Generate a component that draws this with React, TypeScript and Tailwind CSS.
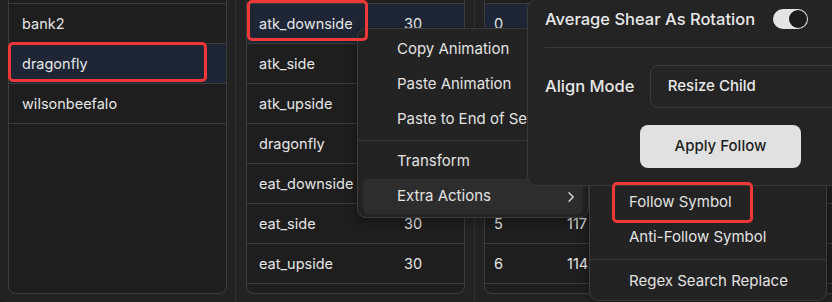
import React from "react";

const rowBorder = "border-b border-[#3b3b3b]";

function Table1() {
  const rows = ["bank2", "dragonfly", "wilsonbeefalo"];
  return (
    <div className="w-[219px] h-[294px] flex flex-col border-x border-b border-[#3d3d3d] rounded-b-[8px] bg-[#1e1e1e] overflow-hidden">
      <div className={`h-[4px] shrink-0 ${rowBorder}`} />
      {rows.map((r, i) => (
        <div
          key={r}
          className={`h-[40px] shrink-0 flex items-center pl-[13px] ${rowBorder} ${i === 1 ? "bg-[#1e2636]" : ""}`}
        >
          {r}
        </div>
      ))}
    </div>
  );
}

function Table2() {
  const rows = ["atk_downside", "atk_side", "atk_upside", "dragonfly", "eat_downside", "eat_side", "eat_upside"];
  return (
    <div className="w-[219px] h-[294px] flex flex-col border-x border-b border-[#3d3d3d] rounded-b-[8px] bg-[#1e1e1e] overflow-hidden">
      <div className={`h-[4px] shrink-0 ${rowBorder}`} />
      {rows.map((r, i) => (
        <div key={r} className={`h-[40px] shrink-0 flex items-center ${rowBorder} ${i === 0 ? "bg-[#1e2636]" : ""}`}>
          <div className="w-[157px] pl-[12px]">{r}</div>
          <div>30</div>
        </div>
      ))}
    </div>
  );
}

function Table3() {
  const rows = [
    ["0", "120"],
    ["1", "118"],
    ["2", "119"],
    ["3", "116"],
    ["4", "115"],
    ["5", "117"],
    ["6", "114"],
  ];
  return (
    <div className="w-[400px] h-[294px] flex flex-col border-x border-b border-[#3d3d3d] rounded-b-[8px] bg-[#1e1e1e] overflow-hidden">
      <div className={`h-[4px] shrink-0 ${rowBorder}`} />
      {rows.map((r, i) => (
        <div key={r[0]} className={`h-[40px] shrink-0 flex items-center ${rowBorder} ${i === 0 ? "bg-[#1e2636]" : ""}`}>
          <div className="w-[82px] pl-[9px]">{r[0]}</div>
          <div>{r[1]}</div>
        </div>
      ))}
    </div>
  );
}

function MenuItem({ label, active, chevron }: { label: string; active?: boolean; chevron?: boolean }) {
  return (
    <div
      className={`h-[35px] flex items-center pl-[34px] pr-[8px] rounded-[6px] ${active ? "bg-[#2d2d2d]" : ""}`}
    >
      <span className="whitespace-nowrap">{label}</span>
      {chevron && (
        <svg className="ml-auto" width="8" height="12" viewBox="0 0 8 12" fill="none">
          <path d="M2 1.8 L6.2 6 L2 10.2" stroke="#d8d8d8" strokeWidth="1.4" strokeLinecap="round" strokeLinejoin="round" />
        </svg>
      )}
    </div>
  );
}

export default function App() {
  return (
    <div className="relative w-[832px] h-[302px] overflow-hidden bg-[#1b1b1b] font-['Inter','Noto_Sans',sans-serif] text-[14.5px] text-[#e6e6e6]">
      <div className="flex h-full">
        <div className="w-[236px] shrink-0 h-full bg-[#232323] border-r border-[#333333] pl-[8px] rounded-bl-[6px]">
          <Table1 />
        </div>
        <div className="w-[239px] shrink-0 h-full bg-[#232323] border-r border-[#333333] pl-[10px]">
          <Table2 />
        </div>
        <div className="flex-1 h-full bg-[#232323] pl-[9px] overflow-hidden">
          <Table3 />
        </div>
      </div>

      {/* Context menu */}
      <div className="absolute left-[357px] top-[28px] w-[232px] bg-[#232323] border border-[#3c3c3c] rounded-[9px] pt-[3px] pb-[3px] px-[5px] text-[15px] text-[#e2e2e2] shadow-[0_4px_12px_rgba(0,0,0,0.35)]">
        <MenuItem label="Copy Animation" />
        <MenuItem label="Paste Animation" />
        <MenuItem label="Paste to End of Selection" />
        <div className="h-px bg-[#3a3a3a] my-[3px] -mx-[5px]" />
        <MenuItem label="Transform" />
        <MenuItem label="Extra Actions" active chevron />
      </div>

      {/* Submenu */}
      <div className="absolute left-[589px] top-[179px] w-[238px] bg-[#232323] border border-[#3c3c3c] rounded-[9px] pt-[5px] pb-[1px] px-[5px] text-[15px] text-[#e2e2e2] shadow-[0_4px_12px_rgba(0,0,0,0.35)]">
        <MenuItem label="Follow Symbol" />
        <MenuItem label="Anti-Follow Symbol" />
        <div className="h-px bg-[#3a3a3a] my-[4px] -mx-[5px]" />
        <MenuItem label="Regex Search Replace" />
      </div>

      {/* Popover */}
      <div className="absolute left-[527px] top-[-1px] w-[320px] h-[187px] bg-[#242424] border border-[#3a3a3a] rounded-[10px] pl-[17px] text-[#e8e8e8]">
        <div className="h-[38px] flex items-center">
          <div className="w-[228px] text-[16.5px] font-medium whitespace-nowrap">Average Shear As Rotation</div>
          <div className="w-[35px] h-[20px] rounded-full bg-[#e4e4e4] flex items-center justify-end pr-[1px]">
            <div className="w-[18px] h-[18px] rounded-full bg-[#1c1c1c]" />
          </div>
        </div>
        <div className="mt-[9px] h-px bg-[#3a3a3a]" />
        <div className="mt-[17px] flex items-center">
          <div className="w-[107px] text-[16.5px] font-medium whitespace-nowrap">Align Mode</div>
          <div className="w-[200px] h-[43px] border border-[#3c3c3c] rounded-[8px] flex items-center pl-[17px] text-[15px] font-medium">
            Resize Child
          </div>
        </div>
        <div className="mt-[17px] ml-[95px] w-[161px] h-[43px] rounded-[8px] bg-[#e1e1e1] text-[#1d1d1d] flex items-center justify-center text-[15px] font-medium">
          Apply Follow
        </div>
      </div>

      {/* Red annotation boxes */}
      <div className="absolute left-[8px] top-[42px] w-[199px] h-[40px] border-[3px] border-[#f03838] rounded-[5px]" />
      <div className="absolute left-[247px] top-[0px] w-[121px] h-[41px] border-[3px] border-[#f03838] rounded-[5px]" />
      <div className="absolute left-[612px] top-[182px] w-[141px] h-[41px] border-[3px] border-[#f03838] rounded-[5px]" />
    </div>
  );
}
